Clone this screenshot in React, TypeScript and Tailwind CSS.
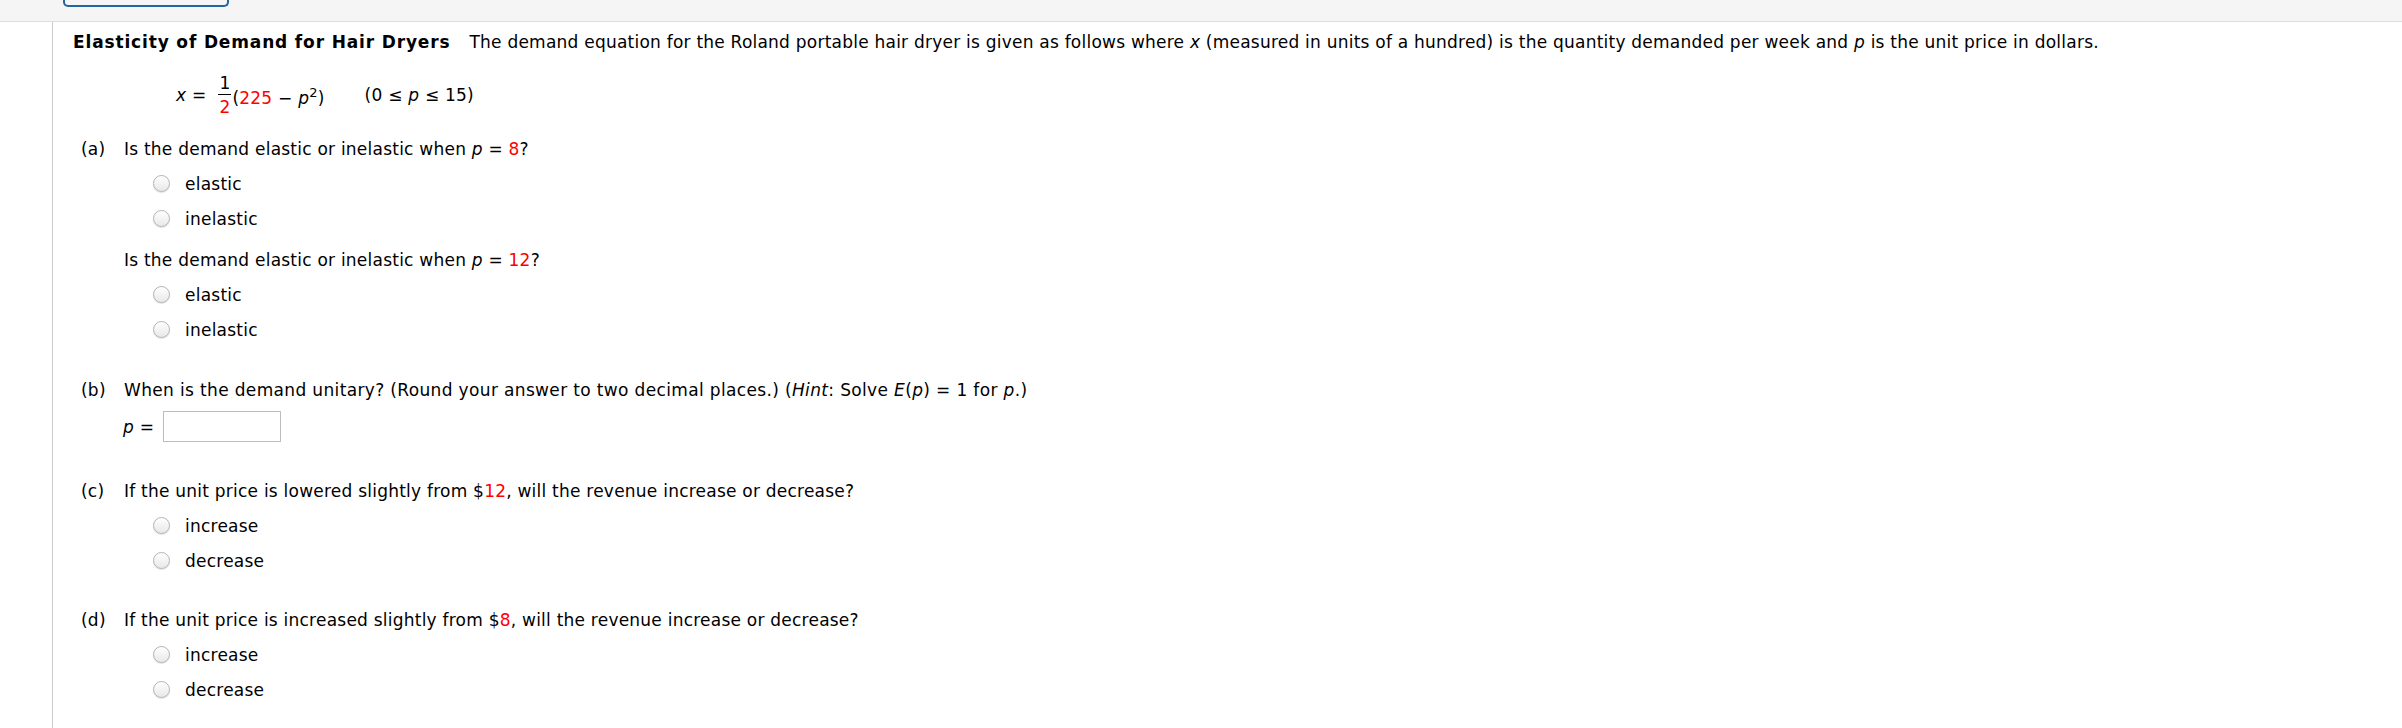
import React from "react";

const Red = ({ children }: { children: React.ReactNode }) => (
  <span className="text-[#ff0000]">{children}</span>
);
const I = ({ children }: { children: React.ReactNode }) => <i>{children}</i>;

function Radio({ label }: { label: string }) {
  return (
    <div className="h-[35px] flex items-center pl-[80px]">
      <span className="w-[17px] h-[17px] rounded-full border border-[#b3b3b3] bg-gradient-to-b from-[#ffffff] to-[#e8e8e8] shadow-[0_1px_1px_rgba(0,0,0,0.12)]" />
      <span className="ml-[15px] leading-[20px]">{label}</span>
    </div>
  );
}

function Question({ label, children }: { label?: string; children: React.ReactNode }) {
  return (
    <div className="h-[35px] flex items-center pl-[8px]">
      <span className="w-[43px] shrink-0 leading-[20px]">{label}</span>
      <span className="leading-[20px] whitespace-nowrap">{children}</span>
    </div>
  );
}

export default function App() {
  return (
    <div className="h-[728px] w-full bg-white overflow-hidden text-black text-[17px] tracking-[0.23px] font-['DejaVu_Sans',Verdana,sans-serif]">
      <div className="h-[22px] bg-[#f5f5f5] border-b border-[#dddddd]">
        <div className="ml-[63px] w-[166px] h-[7px] border-2 border-t-0 border-[#22659f] rounded-b-[5px]" />
      </div>
      <div className="flex h-[706px]">
        <div className="w-[53px] shrink-0 border-r border-[#cccccc]" />
        <div className="pl-[20px] flex flex-col">
          <div className="mt-[10px] h-[20px] leading-[20px] whitespace-nowrap">
            <b className="tracking-[0.85px]">Elasticity of Demand for Hair Dryers</b>
            <span className="ml-[19px]">
              The demand equation for the Roland portable hair dryer is given as follows where <I>x</I> (measured in units of a hundred) is the quantity demanded per week and <I>p</I> is the unit price in dollars.
            </span>
          </div>

          <div className="mt-[19px] h-[48px] flex items-center pl-[103px] whitespace-nowrap">
            <span className="leading-[20px]">
              <I>x</I> =
            </span>
            <span className="ml-[12px] mr-[1px] flex flex-col items-center">
              <span className="leading-[22px]">1</span>
              <span className="w-[13px] h-px bg-black" />
              <span className="leading-[24px] text-[#ff0000]">2</span>
            </span>
            <span className="leading-[20px]">
              (<Red>225</Red> − <I>p</I>
              <span className="text-[13px] align-[7px]">2</span>)
            </span>
            <span className="leading-[20px] ml-[40px]">
              (0 ≤ <I>p</I> ≤ 15)
            </span>
          </div>

          <div className="mt-[12px]">
            <Question label="(a)">
              Is the demand elastic or inelastic when <I>p</I> = <Red>8</Red>?
            </Question>
            <Radio label="elastic" />
            <Radio label="inelastic" />
            <div className="mt-[6px]">
              <Question>
                Is the demand elastic or inelastic when <I>p</I> = <Red>12</Red>?
              </Question>
            </div>
            <Radio label="elastic" />
            <Radio label="inelastic" />
          </div>

          <div className="mt-[25px]">
            <Question label="(b)">
              <span className="tracking-[0.35px]">
                When is the demand unitary? (Round your answer to two decimal places.) (<I>Hint</I>: Solve <I>E</I>(<I>p</I>) = 1 for <I>p</I>.)
              </span>
            </Question>
            <div className="mt-[4px] h-[31px] flex items-center pl-[50px]">
              <span className="leading-[20px] w-[40px]">
                <I>p</I> =
              </span>
              <div className="w-[118px] h-[31px] border border-[#bdbdbd] bg-white" />
            </div>
          </div>

          <div className="mt-[31px]">
            <Question label="(c)">
              If the unit price is lowered slightly from $<Red>12</Red>, will the revenue increase or decrease?
            </Question>
            <Radio label="increase" />
            <Radio label="decrease" />
          </div>

          <div className="mt-[24px]">
            <Question label="(d)">
              If the unit price is increased slightly from $<Red>8</Red>, will the revenue increase or decrease?
            </Question>
            <Radio label="increase" />
            <Radio label="decrease" />
          </div>
        </div>
      </div>
    </div>
  );
}
